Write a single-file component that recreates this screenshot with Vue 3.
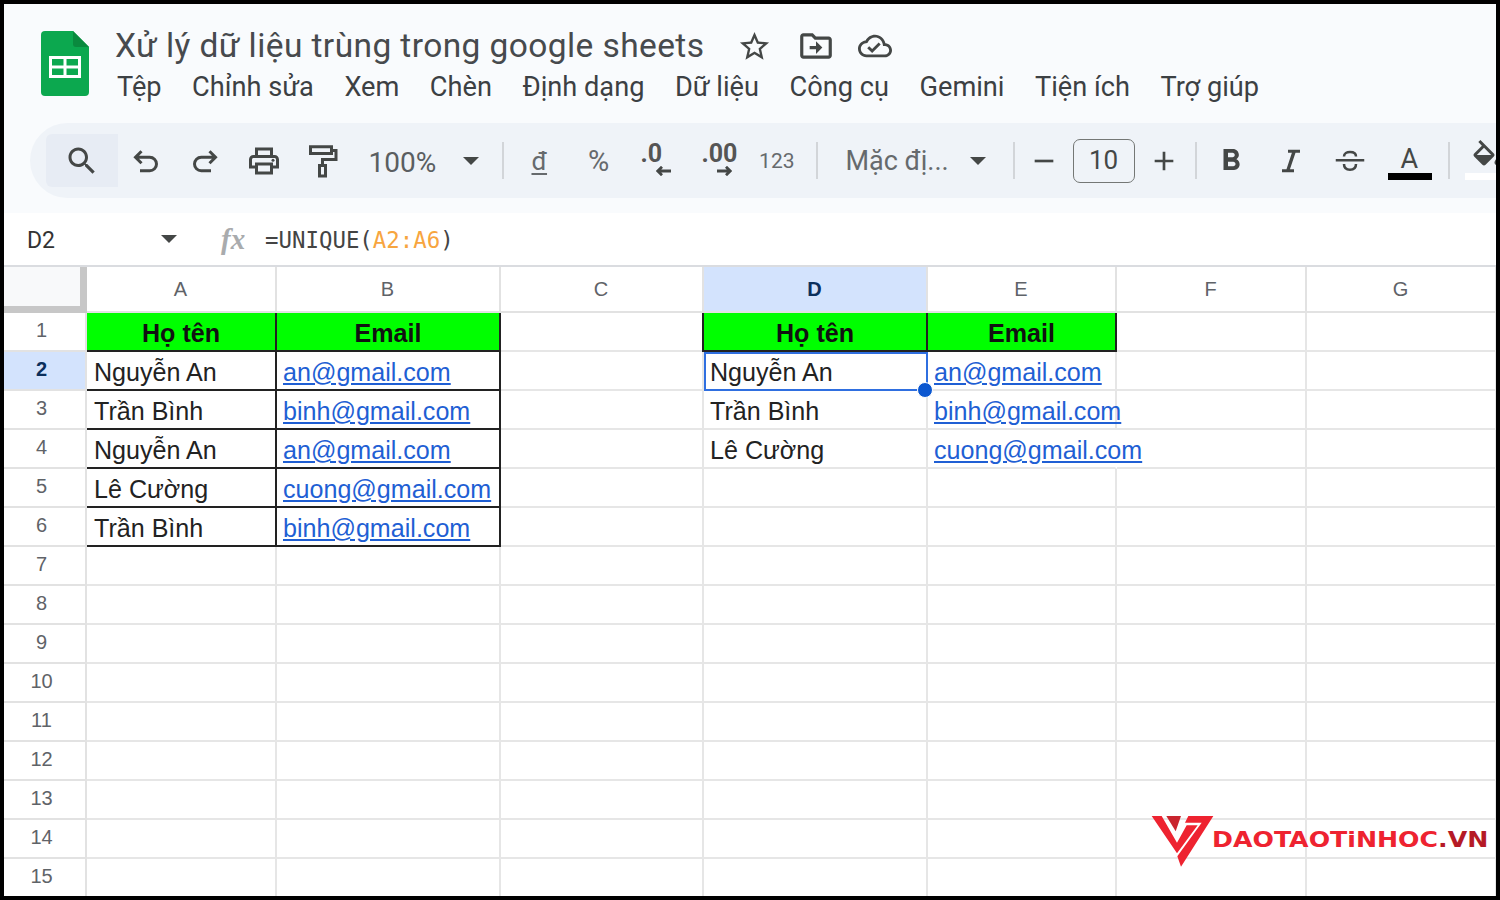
<script setup>
const menus = ['Tệp', 'Chỉnh sửa', 'Xem', 'Chèn', 'Định dạng', 'Dữ liệu', 'Công cụ', 'Gemini', 'Tiện ích', 'Trợ giúp']
const cols = ['A', 'B', 'C', 'D', 'E', 'F', 'G']
const source = [['Nguyễn An', 'an@gmail.com'], ['Trần Bình', 'binh@gmail.com'], ['Nguyễn An', 'an@gmail.com'], ['Lê Cường', 'cuong@gmail.com'], ['Trần Bình', 'binh@gmail.com']]
const unique = [['Nguyễn An', 'an@gmail.com'], ['Trần Bình', 'binh@gmail.com'], ['Lê Cường', 'cuong@gmail.com']]
const rows = Array.from({ length: 15 }, (_, i) => i + 1)
function nameA(r) { return r === 1 ? 'Họ tên' : source[r - 2]?.[0] ?? '' }
function mailB(r) { return r === 1 ? 'Email' : source[r - 2]?.[1] ?? '' }
function nameD(r) { return r === 1 ? 'Họ tên' : unique[r - 2]?.[0] ?? '' }
function mailE(r) { return r === 1 ? 'Email' : unique[r - 2]?.[1] ?? '' }
</script>

<template>
  <div class="frame">
    <header class="top">
      <div class="titlebar">
        <svg class="logo" viewBox="0 0 48 65">
          <path d="M4 0H32L48 16V61a4 4 0 0 1-4 4H4a4 4 0 0 1-4-4V4a4 4 0 0 1 4-4z" fill="#0ca84f" />
          <path d="M32 0L48 16H35a3 3 0 0 1-3-3z" fill="#0a8a3e" />
          <path d="M8 25H40V47H8zM11 28V34.500H22.500V28zM25.500 28V34.500H37V28zM11 37.500V44H22.500V37.500zM25.500 37.500V44H37V37.500z" fill="#fff" fill-rule="evenodd" />
        </svg>
        <div class="titles">
          <div class="title-row">
            <span class="doc-title">Xử lý dữ liệu trùng trong google sheets</span>
            <svg class="ti star" viewBox="0 0 24 24"><path d="M22 9.240l-7.190-.620L12 2 9.190 8.630 2 9.240l5.460 4.730L5.820 21 12 17.270 18.180 21l-1.630-7.030L22 9.240zM12 15.400l-3.760 2.270 1-4.280-3.320-2.880 4.380-.380L12 6.100l1.710 4.040 4.380.380-3.320 2.880 1 4.280L12 15.400z" /></svg>
            <svg class="ti move" viewBox="0 0 24 24"><path d="M20 6h-8l-2-2H4c-1.100 0-2 .900-2 2v12c0 1.100.900 2 2 2h16c1.100 0 2-.900 2-2V8c0-1.100-.900-2-2-2zm0 12H4V6h5.170l2 2H20v10zm-8-4H8v-2h4V9l4 4-4 4v-3z" /></svg>
            <svg class="ti cloud" viewBox="0 0 24 24"><path d="M19.350 10.040C18.670 6.590 15.640 4 12 4 9.110 4 6.600 5.640 5.350 8.040 2.340 8.360 0 10.910 0 14c0 3.310 2.690 6 6 6h13c2.760 0 5-2.240 5-5 0-2.640-2.050-4.780-4.650-4.960zM19 18H6c-2.210 0-4-1.790-4-4 0-2.050 1.530-3.760 3.560-3.970l1.070-.110.500-.950C8.080 7.140 9.940 6 12 6c2.620 0 4.880 1.860 5.390 4.430l.300 1.500 1.530.110c1.560.100 2.780 1.410 2.780 2.960 0 1.650-1.350 3-3 3zm-9-3.820l-2.090-2.090L6.500 13.500 10 17l6.010-6.010-1.410-1.410z" /></svg>
          </div>
          <nav class="menu">
            <span v-for="m in menus" :key="m">{{ m }}</span>
          </nav>
        </div>
      </div>

      <div class="toolbar">
        <div class="search-btn">
          <svg class="ic" viewBox="0 0 24 24"><path d="M15.500 14h-.790l-.280-.270C15.410 12.590 16 11.110 16 9.500 16 5.910 13.090 3 9.500 3S3 5.910 3 9.500 5.910 16 9.500 16c1.610 0 3.090-.590 4.230-1.570l.270.280v.790l5 4.990L20.490 19l-4.990-5zm-6 0C7.010 14 5 11.990 5 9.500S7.010 5 9.500 5 14 7.010 14 9.500 11.990 14 9.500 14z" /></svg>
        </div>
        <div class="tool undo-first"><svg class="ic st" viewBox="0 0 24 24"><path d="M9 5.500L5 9.500l4 4M5 9.500h9.500a4.500 4.500 0 0 1 0 9H8" /></svg></div>
        <div class="tool"><svg class="ic st" viewBox="0 0 24 24"><path d="M15 5.500l4 4-4 4M19 9.500H9.500a4.500 4.500 0 0 0 0 9H16" /></svg></div>
        <div class="tool"><svg class="ic" viewBox="0 0 24 24"><path d="M19 8h-1V3H6v5H5c-1.660 0-3 1.340-3 3v6h4v4h12v-4h4v-6c0-1.660-1.340-3-3-3zM8 5h8v3H8V5zm8 12v2H8v-4h8v2zm2-2v-2H6v2H4v-4c0-.550.450-1 1-1h14c.550 0 1 .450 1 1v4h-2z" /><circle cx="18" cy="11.500" r="1" /></svg></div>
        <div class="tool"><svg class="ic st" viewBox="0 0 24 24"><path d="M3 2.500H17V7H3zM17 5H20V11H11V15M9 15H13V22H9z" /></svg></div>
        <div class="zoom-box"><span class="zoom-text">100%</span><i class="caret"></i></div>
        <i class="sep sep-a"></i>
        <div class="tool glyph"><span class="dong">đ</span></div>
        <div class="tool glyph"><span class="pct">%</span></div>
        <div class="tool dec"><div class="dec-in dec-one"><b>.0</b><svg viewBox="0 0 15 10"><path d="M15 5H2M6 .800L1.800 5 6 9.200" /></svg></div></div>
        <div class="tool dec"><div class="dec-in dec-two"><b>.00</b><svg viewBox="0 0 15 10"><path d="M0 5H13M9 .800L13.200 5 9 9.200" /></svg></div></div>
        <div class="tool glyph num"><span>123</span></div>
        <i class="sep sep-b"></i>
        <div class="font-box"><span>Mặc đị...</span><i class="caret"></i></div>
        <i class="sep sep-c"></i>
        <div class="step"><svg class="ic small" viewBox="0 0 24 24"><path d="M5 11h14v2H5z" /></svg></div>
        <div class="size">10</div>
        <div class="step"><svg class="ic small" viewBox="0 0 24 24"><path d="M19 13h-6v6h-2v-6H5v-2h6V5h2v6h6v2z" /></svg></div>
        <i class="sep sep-d"></i>
        <div class="tool"><svg class="ic" viewBox="0 0 24 24"><path d="M15.600 10.790c.970-.670 1.650-1.770 1.650-2.790 0-2.260-1.750-4-4-4H7v14h7.040c2.090 0 3.710-1.700 3.710-3.790 0-1.520-.860-2.820-2.150-3.420zM10 6.500h3c.830 0 1.500.670 1.500 1.500s-.670 1.500-1.500 1.500h-3v-3zm3.500 9H10v-3h3.500c.830 0 1.500.670 1.500 1.500s-.670 1.500-1.500 1.500z" /></svg></div>
        <div class="tool"><svg class="ic" viewBox="0 0 24 24"><path d="M10 4.500v2h2.600L9 17.500H6v2h8v-2h-2.700L15 6.500h3v-2z" /></svg></div>
        <div class="tool"><svg class="ic st thin" viewBox="0 0 24 24"><path d="M2.500 11.500H21.500M8 9C8 6.800 10 6 12 6s4 .800 4 3M8 14c0 2.800 2 3.800 4 3.800s4-1 4-3.800" /></svg></div>
        <div class="tool text-color"><span>A</span><i></i></div>
        <i class="sep sep-e"></i>
        <div class="fill"><svg class="ic" viewBox="0 0 24 24"><path d="M16.560 8.940L7.620 0 6.210 1.410l2.380 2.380-5.150 5.150c-.590.590-.590 1.540 0 2.120l5.500 5.500c.290.290.680.440 1.060.440s.770-.150 1.060-.440l5.500-5.500c.590-.580.590-1.530 0-2.120zM5.210 10L10 5.210 14.790 10H5.210zM19 11.500s-2 2.170-2 3.500c0 1.100.900 2 2 2s2-.900 2-2c0-1.330-2-3.500-2-3.500z" /></svg><i></i></div>
      </div>
    </header>

    <div class="formula">
      <span class="cell-ref">D2</span>
      <i class="caret ref-caret"></i>
      <span class="fx">fx</span>
      <span class="expr">=UNIQUE(<em>A2:A6</em>)</span>
    </div>

    <div class="sheet">
      <div class="corner"></div>
      <div v-for="c in cols" :key="c" class="col-head" :class="{ active: c === 'D' }">{{ c }}</div>

      <template v-for="r in rows" :key="r">
        <div class="row-head" :class="{ active: r === 2 }">{{ r }}</div>
        <div class="cell first" :class="{ head: r === 1, boxed: r <= 6 }">{{ nameA(r) }}</div>
        <div class="cell" :class="{ head: r === 1, boxed: r <= 6, link: r > 1 && r <= 6 }">{{ mailB(r) }}</div>
        <div class="cell"></div>
        <div class="cell" :class="{ head: r === 1, boxed: r === 1, leftline: r === 1, selected: r === 2 }">
          {{ nameD(r) }}<i v-if="r === 2" class="handle"></i>
        </div>
        <div class="cell" :class="{ head: r === 1, boxed: r === 1, link: r > 1 && r <= 4, open: r === 4 }">{{ mailE(r) }}</div>
        <div class="cell"></div>
        <div class="cell"></div>
      </template>
    </div>

    <div class="brand">
      <svg class="brand-mark" viewBox="0 0 240 192">
        <path d="M20 24H50L96 104 125 52H158L96 136z" fill="#ee2330" />
        <path d="M205 24L108 176 97 145 170 44H120L130 24z" fill="#ee2330" />
        <path d="M64 24H108L92 70z" fill="#c9252e" />
      </svg>
      <span class="brand-text">DAOTAOTiNHOC<b>.VN</b></span>
    </div>
  </div>
</template>

<style scoped>
.frame {
  position: relative;
  width: 1500px;
  height: 900px;
  box-sizing: border-box;
  border: 4px solid #000;
  background: #fff;
  overflow: hidden;
  font-family: Roboto, "Noto Sans", sans-serif;
}
.top {
  height: 209px;
  background: #f9fbfd;
  display: flex;
  flex-direction: column;
}
.titlebar {
  display: flex;
  align-items: flex-start;
  flex: none;
  padding: 27px 0 0 37px;
  height: 92px;
  box-sizing: content-box;
}
.logo {
  width: 48px;
  height: 65px;
  flex: none;
}
.titles {
  margin-left: 26px;
}
.title-row {
  display: flex;
  align-items: center;
  height: 30px;
}
.doc-title {
  font-size: 33.500px;
  line-height: 30px;
  color: #474a4d;
  white-space: nowrap;
  width: 622px;
  letter-spacing: 0.410px;
  flex: none;
}
.ti {
  fill: #444746;
  flex: none;
}
.star { width: 35px; height: 35px; }
.move { width: 38px; height: 38px; margin-left: 25px; }
.cloud { width: 34px; height: 34px; margin-left: 23px; }
.menu {
  display: flex;
  gap: 30.500px;
  margin-top: 9px;
  margin-left: 2px;
  font-size: 27.200px;
  line-height: 34px;
  color: #3c4043;
  white-space: nowrap;
}
.toolbar {
  display: flex;
  align-items: center;
  flex: none;
  margin-left: 26px;
  height: 75px;
  padding-left: 16px;
  border-radius: 38px 0 0 38px;
  background: #eff3f8;
  white-space: nowrap;
}
.search-btn {
  width: 72px;
  height: 53px;
  flex: none;
  background: #e7ecf4;
  border-radius: 6px 0 0 6px;
  display: flex;
  align-items: center;
  justify-content: center;
}
.ic {
  width: 36px;
  height: 36px;
  fill: #444746;
  flex: none;
}
.ic.small { width: 32px; height: 32px; }
.ic.st {
  fill: none;
  stroke: #444746;
  stroke-width: 2;
}
.ic.thin { stroke-width: 1.700; }
.tool {
  width: 59.400px;
  height: 53px;
  flex: none;
  display: flex;
  align-items: center;
  justify-content: center;
  color: #666a6d;
}
.undo-first { margin-left: -2px; }
.zoom-box {
  display: flex;
  align-items: center;
  flex: none;
  width: 132px;
  padding-left: 15px;
  box-sizing: border-box;
  font-size: 28px;
  color: #5a5e61;
}
.zoom-text { width: 94px; padding-top: 3px; }
.caret {
  display: block;
  flex: none;
  width: 0;
  height: 0;
  border-left: 8px solid transparent;
  border-right: 8px solid transparent;
  border-top: 8px solid #444746;
}
.sep {
  display: block;
  flex: none;
  width: 2px;
  height: 37px;
  background: #d2d5d9;
}
.sep-a { margin-left: 16px; margin-right: 6px; }
.sep-b { margin-left: 9px; }
.sep-c { margin-left: 27px; }
.sep-d { margin-left: 2px; margin-right: 5px; }
.sep-e { margin-left: 9px; }
.glyph { font-size: 26px; }
.pct { font-size: 29px; }
.dong {
  text-decoration: underline;
  text-underline-offset: 3px;
}
.num { font-size: 21px; }
.dec-in {
  display: flex;
  flex-direction: column;
  color: #555;
}
.dec-one { width: 30px; margin-left: -5px; }
.dec-two { width: 31px; margin-left: -1px; }
.dec-in b {
  font-size: 25px;
  line-height: 18px;
  font-weight: 700;
  align-self: flex-start;
}
.dec-in svg {
  width: 15px;
  height: 10px;
  fill: none;
  stroke: #444746;
  stroke-width: 2.800;
  margin-top: 3px;
  align-self: flex-end;
}
.font-box {
  display: flex;
  align-items: center;
  flex: none;
  width: 168px;
  padding-left: 28px;
  box-sizing: border-box;
  font-size: 27px;
  color: #666a6d;
}
.font-box span { width: 125px; }
.step {
  width: 58px;
  flex: none;
  display: flex;
  justify-content: center;
}
.size {
  width: 62px;
  height: 44px;
  flex: none;
  box-sizing: border-box;
  border: 1.500px solid #747775;
  border-radius: 7px;
  text-align: center;
  font-size: 26px;
  line-height: 41px;
  color: #444746;
}
.text-color {
  position: relative;
  flex-direction: column;
  font-size: 27px;
  color: #444746;
}
.text-color span {
  line-height: 30px;
  margin-top: -3px;
}
.text-color i {
  position: absolute;
  left: 8px;
  top: 39px;
  width: 44px;
  height: 7px;
  background: #000;
}
.fill {
  position: relative;
  flex: none;
  width: 80px;
  height: 53px;
  margin-left: 15px;
}
.fill .ic {
  position: absolute;
  left: 4px;
  top: 6px;
}
.fill i {
  position: absolute;
  left: 0;
  top: 39px;
  width: 44px;
  height: 7px;
  background: #fff;
}
.formula {
  height: 54px;
  box-sizing: border-box;
  display: flex;
  align-items: center;
  border-bottom: 2px solid #dadce0;
  background: #fff;
  padding-left: 23px;
}
.cell-ref {
  width: 134px;
  font-size: 23px;
  color: #333;
  padding-top: 2px;
}
.ref-caret { margin-right: 44px; }
.fx {
  width: 44px;
  font-family: "Liberation Serif", serif;
  font-style: italic;
  font-weight: 700;
  font-size: 29px;
  color: #a9abad;
}
.expr {
  font-family: "DejaVu Sans Mono", monospace;
  font-size: 22.400px;
  color: #444;
  padding-top: 2px;
}
.expr em {
  font-style: normal;
  color: #f7a53f;
}
.sheet {
  display: grid;
  grid-template-columns: 83px 190px 224px 203px 224px 189px 190px 190px;
  grid-template-rows: 46px repeat(15, 39.030px);
  font-family: "Liberation Sans", Arial, sans-serif;
}
.corner {
  box-sizing: border-box;
  background: #f8f9fa;
  border-right: 7px solid #c7c7c7;
  border-bottom: 7px solid #c7c7c7;
}
.col-head {
  box-sizing: border-box;
  display: flex;
  align-items: center;
  justify-content: center;
  padding-right: 1px;
  border-right: 2px solid #e2e2e2;
  border-bottom: 2px solid #e2e2e2;
  font-size: 20px;
  color: #5f6368;
}
.col-head.active {
  background: #d3e3fd;
  color: #0b2f5c;
  font-weight: 700;
}
.row-head {
  box-sizing: border-box;
  display: flex;
  align-items: center;
  justify-content: center;
  padding-right: 6px;
  padding-bottom: 3px;
  border-right: 2px solid #e2e2e2;
  border-bottom: 2px solid #e2e2e2;
  font-size: 20px;
  color: #5f6368;
}
.row-head.active {
  background: #d3e3fd;
  color: #0b2f5c;
  font-weight: 700;
}
.cell {
  position: relative;
  box-sizing: border-box;
  padding: 3px 0 0 6px;
  border-right: 2px solid #e6e6e6;
  border-bottom: 2px solid #e6e6e6;
  font-size: 25.100px;
  line-height: 34px;
  color: #222;
  white-space: nowrap;
}
.cell.first { padding-left: 7px; }
.cell.boxed {
  border-right: 2px solid #222;
  border-bottom: 2px solid #222;
}
.cell.leftline { box-shadow: -2px 0 0 #222; }
.cell.head {
  background: #00ff00;
  color: #111;
  font-weight: 700;
  text-align: center;
  padding-left: 0;
}
.cell.link {
  color: #1f5fd4;
  text-decoration: underline;
}
.cell.open { border-right-color: transparent; }
.cell.selected {
  z-index: 2;
  outline: 2.500px solid #2f6fe0;
  outline-offset: -2px;
}
.handle {
  position: absolute;
  right: -7px;
  bottom: -9px;
  width: 14px;
  height: 14px;
  background: #0b57d0;
  border: 1.500px solid #fff;
  border-radius: 50%;
}
.brand {
  position: absolute;
  left: 1141px;
  top: 804px;
  display: flex;
  align-items: center;
}
.brand-mark {
  width: 80px;
  height: 64px;
  flex: none;
}
.brand-text {
  margin-left: -13px;
  margin-top: -1px;
  font-family: "DejaVu Sans", sans-serif;
  font-weight: 700;
  font-size: 20.500px;
  color: #ee2330;
  white-space: nowrap;
  transform: scaleX(1.230);
  transform-origin: left center;
}
.brand-text b {
  color: #b51a26;
}
</style>
